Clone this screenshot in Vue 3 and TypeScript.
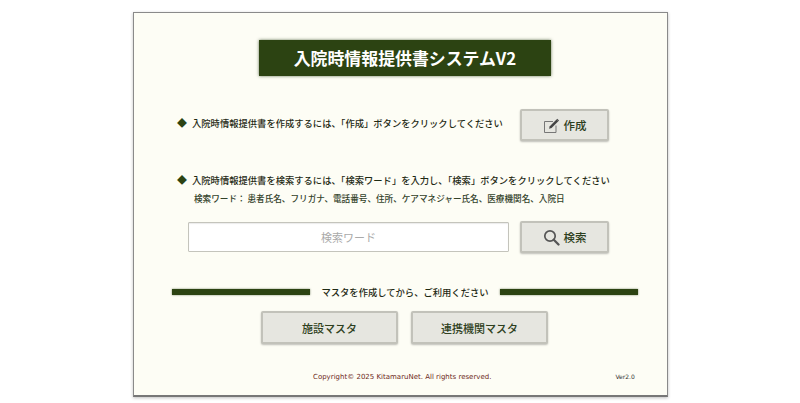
<script setup lang="ts">
const terms = '検索ワード： 患者氏名、フリガナ、電話番号、住所、ケアマネジャー氏名、医療機関名、入院日'
</script>

<template>
  <div class="page">
    <main class="card">
      <h1 class="title">入院時情報提供書システムV2</h1>

      <section class="row create-row">
        <p class="lead raised"><span class="mark">◆</span>入院時情報提供書を作成するには、「作成」ボタンをクリックしてください</p>
        <button class="btn action" type="button">
          <svg class="icon" width="17" height="15" viewBox="0 0 17 15" fill="none">
            <path d="M10 3.5H1.5v11H13V7.5" stroke="#777" stroke-width="1" />
            <path d="M6 10.8l.8-2.6 6.7-6.7 1.8 1.8-6.7 6.7z" fill="#444" />
            <path d="M14.2 .8l1.8 1.8-.7.7-1.8-1.8z" fill="#444" />
          </svg>
          作成
        </button>
      </section>

      <section class="search-info">
        <p class="lead"><span class="mark">◆</span>入院時情報提供書を検索するには、「検索ワード」を入力し、「検索」ボタンをクリックしてください</p>
        <p class="terms">{{ terms }}</p>
      </section>

      <section class="row search-row">
        <input class="search" type="text" placeholder="検索ワード" />
        <button class="btn action" type="button">
          <svg class="icon" width="17" height="17" viewBox="0 0 17 17" fill="none">
            <circle cx="7" cy="7" r="5.2" stroke="#555" stroke-width="1.7" />
            <path d="M10.8 10.8l4.7 4.7" stroke="#555" stroke-width="2.3" stroke-linecap="round" />
          </svg>
          検索
        </button>
      </section>

      <div class="divider">
        <span class="bar"></span>
        <span class="divider-text">マスタを作成してから、ご利用ください</span>
        <span class="bar"></span>
      </div>

      <div class="masters">
        <button class="btn master" type="button">施設マスタ</button>
        <button class="btn master" type="button">連携機関マスタ</button>
      </div>

      <footer class="foot">
        <span class="copy">Copyright© 2025 KitamaruNet. All rights reserved.</span>
        <span class="ver">Ver2.0</span>
      </footer>
    </main>
  </div>
</template>

<style>
html, body { background: #fff; }
</style>

<style scoped>
.page {
  width: 800px;
  height: 403px;
  padding: 12px 0 0 133px;
  box-sizing: border-box;
  overflow: hidden;
  font-family: "Noto Sans CJK JP", "Liberation Sans", sans-serif;
}
.card {
  width: 535px;
  height: 385px;
  box-sizing: border-box;
  background: #fdfdf5;
  border: 1px solid #8a8a8a;
  border-bottom: 2px solid #777;
  box-shadow: 0 1px 3px rgba(0,0,0,0.25);
  display: flex;
  flex-direction: column;
  color: #26331a;
}
.title {
  align-self: flex-start;
  width: 292px;
  height: 36px;
  margin: 27px 0 0 125px;
  background: #2c4312;
  box-shadow: 0 0 3px rgba(40,60,20,0.7);
  color: #fff;
  font-size: 16.9px;
  font-weight: 700;
  line-height: 36px;
  text-align: center;
}
.row { display: flex; align-items: center; }
.create-row {
  margin-top: 33px;
  padding-left: 43px;
  height: 32px;
  justify-content: space-between;
  padding-right: 58px;
}
.lead {
  margin: 0;
  font-size: 9.3px;
  font-weight: 500;
  line-height: 14px;
  white-space: nowrap;
  color: #1f2a14;
}
.raised { margin-bottom: 5px; }
.mark {
  display: inline-block;
  width: 15px;
  color: #2c4312;
  font-size: 10px;
}
.search-info { margin-top: 32px; padding-left: 43px; }
.terms {
  margin: 5px 0 0 17px;
  font-size: 8.6px;
  line-height: 13px;
  font-weight: 500;
  white-space: nowrap;
  color: #33422a;
}
.search-row {
  margin-top: 16px;
  padding-left: 54px;
  gap: 11px;
}
.search {
  width: 321px;
  height: 30px;
  box-sizing: border-box;
  padding: 0;
  background: #fff;
  border: 1px solid #c4c4bc;
  border-radius: 1px;
  box-shadow: inset 0 1px 1px rgba(0,0,0,0.08);
  font: inherit;
  font-size: 11px;
  text-align: center;
  outline: none;
}
.search::placeholder { color: #aaa; opacity: 1; }
.btn {
  box-sizing: border-box;
  padding: 0;
  background: #e6e6e0;
  border: 2px solid #c2c2ba;
  border-radius: 2px;
  box-shadow: 0 1px 2px rgba(0,0,0,0.25);
  color: #2e4020;
  font-family: inherit;
  font-weight: 500;
  display: inline-flex;
  align-items: center;
  justify-content: center;
}
.action {
  width: 89px;
  height: 32px;
  font-size: 11.5px;
  gap: 4px;
}
.divider {
  margin-top: 35px;
  padding-left: 38px;
  display: flex;
  align-items: center;
  height: 8px;
}
.bar {
  width: 138px;
  height: 6px;
  background: #2c4312;
  box-shadow: 0 0 2px rgba(40,60,20,0.7);
}
.divider-text {
  width: 190px;
  font-size: 9.3px;
  font-weight: 500;
  line-height: 14px;
  text-align: center;
  white-space: nowrap;
  color: #1f2a14;
}
.masters {
  margin-top: 15px;
  padding-left: 127px;
  display: flex;
  gap: 13px;
}
.master {
  width: 137px;
  height: 33px;
  font-size: 11px;
}
.foot {
  margin-top: 27px;
  height: 12px;
  display: flex;
  font-family: "DejaVu Sans", sans-serif;
  line-height: 12px;
}
.copy {
  margin-left: 179px;
  font-size: 7px;
  color: #6e2a22;
  white-space: nowrap;
}
.ver {
  margin-left: 124px;
  font-size: 6px;
  color: #333;
}
</style>
